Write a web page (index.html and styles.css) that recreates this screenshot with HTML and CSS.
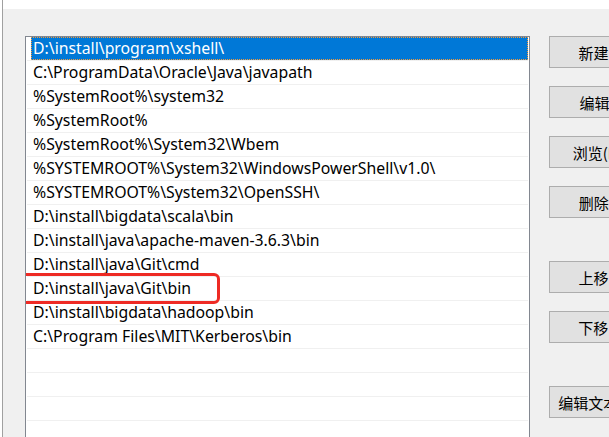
FILE: index.html
```html
<!DOCTYPE html>
<html lang="zh-CN">
<head>
<meta charset="utf-8">
<title>编辑环境变量</title>
<link rel="stylesheet" href="styles.css">
</head>
<body>
<div class="page">
  <div class="edge"></div>
  <div class="window">
    <div class="topband"></div>
    <div class="dialog">
      <div class="list">
        <div class="row selected"><span class="cell">D:\install\program\xshell\</span></div>
        <div class="row"><span class="cell">C:\ProgramData\Oracle\Java\javapath</span></div>
        <div class="row"><span class="cell">%SystemRoot%\system32</span></div>
        <div class="row"><span class="cell">%SystemRoot%</span></div>
        <div class="row"><span class="cell">%SystemRoot%\System32\Wbem</span></div>
        <div class="row"><span class="cell">%SYSTEMROOT%\System32\WindowsPowerShell\v1.0\</span></div>
        <div class="row"><span class="cell">%SYSTEMROOT%\System32\OpenSSH\</span></div>
        <div class="row"><span class="cell">D:\install\bigdata\scala\bin</span></div>
        <div class="row"><span class="cell">D:\install\java\apache-maven-3.6.3\bin</span></div>
        <div class="row"><span class="cell">D:\install\java\Git\cmd</span></div>
        <div class="row marked"><span class="cell">D:\install\java\Git\bin</span></div>
        <div class="row"><span class="cell">D:\install\bigdata\hadoop\bin</span></div>
        <div class="row"><span class="cell">C:\Program Files\MIT\Kerberos\bin</span></div>
        <div class="row"></div>
        <div class="row"></div>
        <div class="row"></div>
        <div class="row"></div>
      </div>
      <div class="buttons">
        <button class="btn">新建(N)</button>
        <button class="btn">编辑(E)</button>
        <button class="btn">浏览(B)...</button>
        <button class="btn">删除(D)</button>
        <button class="btn spaced">上移(U)</button>
        <button class="btn">下移(O)</button>
        <button class="btn spaced">编辑文本(T)...</button>
      </div>
    </div>
  </div>
</div>
</body>
</html>
```
FILE: styles.css
```css
html, body {
  margin: 0;
  padding: 0;
  height: 100%;
  overflow: hidden;
  background: #f0f0f0;
  font-family: "Noto Sans", "Noto Sans CJK SC", sans-serif;
  font-size: 15.8px;
  color: #000;
}

.page {
  display: flex;
  height: 100%;
}

.edge {
  width: 2px;
  background: #ffffff;
  border-right: 1px solid #a0a0a0;
  flex: none;
}

.window {
  flex: 1;
  display: flex;
  flex-direction: column;
  min-width: 0;
}

.topband {
  height: 9px;
  background: #ffffff;
  flex: none;
}

.dialog {
  display: flex;
  align-items: flex-start;
  padding: 27px 0 0 22px;
  gap: 19px;
}

.list {
  width: 502px;
  height: 420px;
  flex: none;
  background: #ffffff;
  border: 1px solid #828790;
  border-bottom: none;
  padding-left: 1px;
  box-sizing: content-box;
  overflow: hidden;
}

.row {
  position: relative;
  height: 23px;
  width: 501px;
  border-bottom: 1px solid #f0f0f0;
  display: flex;
  align-items: center;
  white-space: nowrap;
}

.cell {
  padding-left: 6px;
  line-height: 23px;
}

.selected .cell {
  margin-left: 4px;
  padding-left: 2px;
  flex: 1;
  background: #0078d7;
  color: #ffffff;
  outline: 1px dotted #f59a3a;
  outline-offset: -1px;
}

.marked::after {
  content: "";
  position: absolute;
  left: -14px;
  top: -4px;
  width: 201px;
  height: 25px;
  border: 3px solid #ee2a24;
  border-radius: 6px;
}

.buttons {
  display: flex;
  flex-direction: column;
  gap: 18px;
}

.btn {
  width: 110px;
  height: 32px;
  flex: none;
  background: #e1e1e1;
  border: 1px solid #adadad;
  border-radius: 0;
  padding: 0;
  font-family: "Noto Sans CJK SC", "Noto Sans", sans-serif;
  font-size: 15px;
  color: #000;
  text-align: center;
  white-space: nowrap;
}

.btn.spaced {
  margin-top: 25px;
}
```
